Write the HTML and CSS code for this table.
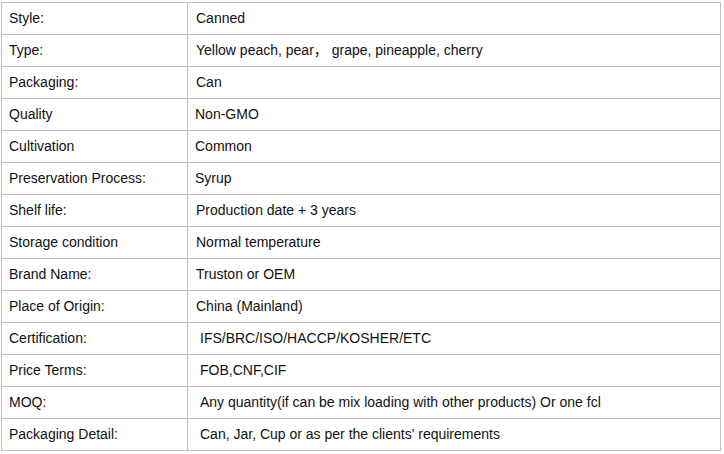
FILE: index.html
```html
<!DOCTYPE html>
<html lang="en">
<head>
<meta charset="utf-8">
<title>Product specification</title>
<link rel="stylesheet" href="styles.css">
</head>
<body>
<table class="spec">
  <tbody>
    <tr><td class="k">Style:</td><td class="v">Canned</td></tr>
    <tr><td class="k">Type:</td><td class="v">Yellow peach, pear， grape, pineapple, cherry</td></tr>
    <tr><td class="k">Packaging:</td><td class="v">Can</td></tr>
    <tr><td class="k">Quality</td><td class="v tight">Non-GMO</td></tr>
    <tr><td class="k">Cultivation</td><td class="v tight">Common</td></tr>
    <tr><td class="k">Preservation Process:</td><td class="v tight">Syrup</td></tr>
    <tr><td class="k">Shelf life:</td><td class="v">Production date + 3 years</td></tr>
    <tr><td class="k">Storage condition</td><td class="v">Normal temperature</td></tr>
    <tr><td class="k">Brand Name:</td><td class="v">Truston or OEM</td></tr>
    <tr><td class="k">Place of Origin:</td><td class="v">China (Mainland)</td></tr>
    <tr><td class="k">Certification:</td><td class="v wide">IFS/BRC/ISO/HACCP/KOSHER/ETC</td></tr>
    <tr><td class="k">Price Terms:</td><td class="v wide">FOB,CNF,CIF</td></tr>
    <tr><td class="k">MOQ:</td><td class="v wide">Any quantity(if can be mix loading with other products) Or one fcl</td></tr>
    <tr><td class="k">Packaging Detail:</td><td class="v wide">Can, Jar, Cup or as per the clients' requirements</td></tr>
  </tbody>
</table>
</body>
</html>
```

FILE: styles.css
```css
html, body {
  margin: 0;
  background: #ffffff;
}
body {
  padding: 2px 0 0 1px;
  font-family: "Liberation Sans", Arial, "Noto Sans CJK SC", sans-serif;
  font-size: 14px;
  color: #111111;
}
.spec {
  border-collapse: collapse;
  width: 720px;
  table-layout: fixed;
}
.spec tr {
  height: 32px;
}
.spec td {
  box-sizing: border-box;
  border: 1px solid #c0c0c0;
  padding: 0 0 2px 0;
  vertical-align: middle;
  white-space: nowrap;
  line-height: 16px;
}
.spec .k {
  width: 186px;
  padding-left: 7px;
}
.spec .v {
  padding-left: 8px;
}
.spec .v.tight {
  padding-left: 7px;
}
.spec .v.wide {
  padding-left: 12px;
}
```
